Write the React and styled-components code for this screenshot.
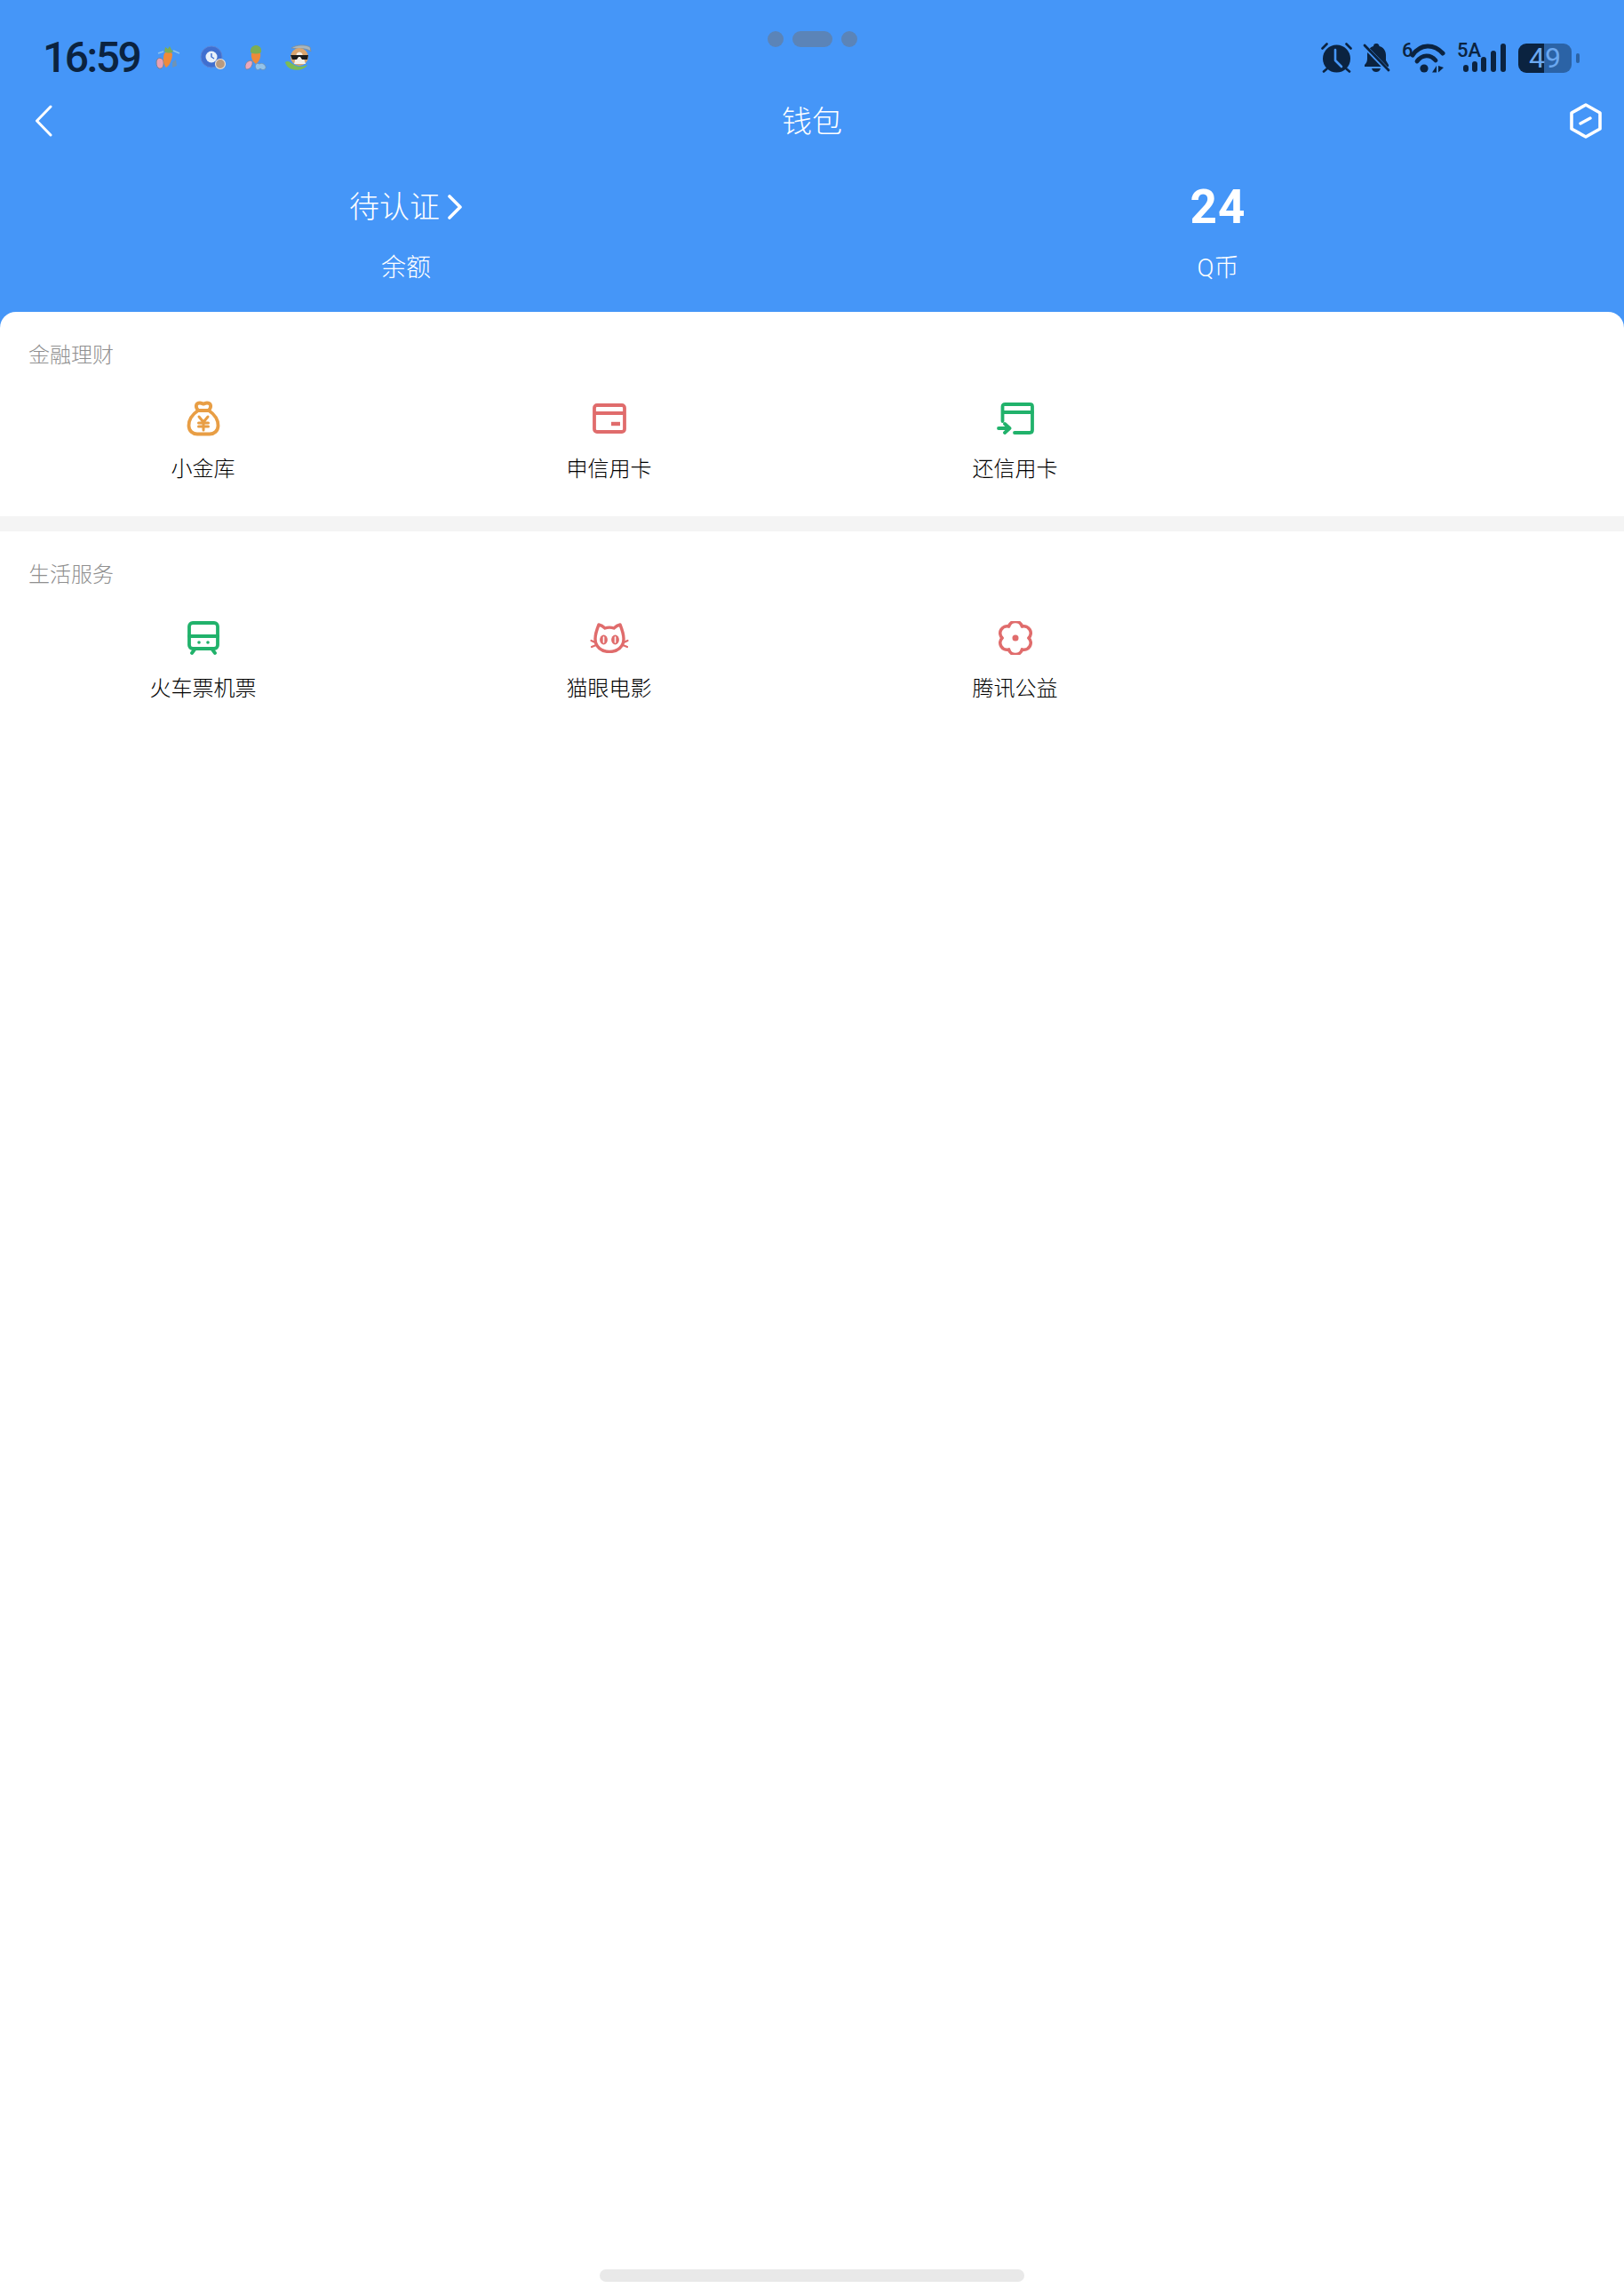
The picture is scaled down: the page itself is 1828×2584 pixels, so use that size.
import styled, { createGlobalStyle } from 'styled-components';

const dark = '#0b2340'
const blue = '#4596f8'
const cjk = `Roboto, "Noto Sans CJK SC", sans-serif`

const Global = createGlobalStyle`
html, body {
    margin: 0;
    padding: 0;
    background: #FFFFFF;
}
* {
    box-sizing: border-box;
}
`

const financeItems = [
    { name: '小金库', icon: <BagIcon /> },
    { name: '申信用卡', icon: <CardIcon /> },
    { name: '还信用卡', icon: <RepayIcon /> },
]

const lifeItems = [
    { name: '火车票机票', icon: <TrainIcon /> },
    { name: '猫眼电影', icon: <CatIcon /> },
    { name: '腾讯公益', icon: <FlowerIcon /> },
]

export default function App() {
    return (
        <Page>
            <Global />
            <Header>
                <Island>
                    <IslandDot />
                    <IslandPill />
                    <IslandDot />
                </Island>
                <StatusBar>
                    <StatusLeft>
                        <Time>16:59</Time>
                        <Notifications>
                            <CarrotCry />
                            <ClockBadge />
                            <CarrotHeart />
                            <DogGlasses />
                        </Notifications>
                    </StatusLeft>
                    <StatusRight>
                        <AlarmIcon />
                        <BellOffIcon />
                        <WifiIcon />
                        <SignalIcon />
                        <Battery>49</Battery>
                    </StatusRight>
                </StatusBar>
                <NavBar>
                    <BackButton>
                        <svg width="20" height="36" viewBox="0 0 20 36" fill="none">
                            <path d="M18 2 L2.5 18 L18 34" stroke="#fff" strokeWidth="3" strokeLinecap="round" strokeLinejoin="round" />
                        </svg>
                    </BackButton>
                    <Title>钱包</Title>
                    <HexButton>
                        <svg width="36" height="40" viewBox="0 0 36 40" fill="none">
                            <path d="M18 2 L34 11 V29 L18 38 L2 29 V11 Z" stroke="#fff" strokeWidth="3.6" strokeLinejoin="round" />
                            <path d="M12 23 L23 17" stroke="#fff" strokeWidth="3.4" strokeLinecap="round" />
                        </svg>
                    </HexButton>
                </NavBar>
                <Stats>
                    <Stat>
                        <Pending>
                            待认证
                            <svg width="18" height="28" viewBox="0 0 18 28" fill="none">
                                <path d="M3 2 L15 14 L3 26" stroke="#fff" strokeWidth="3.6" strokeLinecap="round" strokeLinejoin="round" />
                            </svg>
                        </Pending>
                        <StatLabel>余额</StatLabel>
                    </Stat>
                    <Stat>
                        <Coins>24</Coins>
                        <StatLabel>Q币</StatLabel>
                    </Stat>
                </Stats>
            </Header>
            <Sheet>
                <Section>
                    <SectionTitle>金融理财</SectionTitle>
                    <Grid>
                        {financeItems.map(item => (
                            <Item key={item.name}>
                                <IconBox>{item.icon}</IconBox>
                                <ItemName>{item.name}</ItemName>
                            </Item>
                        ))}
                    </Grid>
                </Section>
                <Divider />
                <Section>
                    <SectionTitle>生活服务</SectionTitle>
                    <Grid>
                        {lifeItems.map(item => (
                            <Item key={item.name}>
                                <IconBox>{item.icon}</IconBox>
                                <ItemName>{item.name}</ItemName>
                            </Item>
                        ))}
                    </Grid>
                </Section>
            </Sheet>
            <HomeBar />
        </Page>
    )
}

function BagIcon() {
    return (
        <svg width="38" height="40" viewBox="0 0 38 40" fill="none" stroke="#e89e45" strokeWidth="3.8" strokeLinecap="round" strokeLinejoin="round">
            <path d="M13 11 C7 15 2.5 21 2.5 28 C2.5 34 7 37.5 12 37.5 H26 C31 37.5 35.5 34 35.5 28 C35.5 21 31 15 25 11 Z" />
            <path d="M13 11 C9 6 11 2.5 15 2.5 C17 2.5 18 3.5 19 3.5 C20 3.5 21 2.5 23 2.5 C27 2.5 29 6 25 11" />
            <path d="M14 18 L19 24 L24 18 M13.5 25 H24.5 M13.5 29 H24.5 M19 24 V33" strokeWidth="3" />
        </svg>
    )
}

function CardIcon() {
    return (
        <svg width="38" height="34" viewBox="0 0 38 34" fill="none" stroke="#e06c6c" strokeWidth="3.8">
            <rect x="2" y="2" width="34" height="30" rx="3" />
            <path d="M2 11 H36" />
            <path d="M21 23 H31" strokeWidth="4.4" />
        </svg>
    )
}

function RepayIcon() {
    return (
        <svg width="42" height="36" viewBox="0 0 42 36" fill="none" stroke="#21b26b" strokeWidth="3.8" strokeLinecap="round" strokeLinejoin="round">
            <path d="M6.5 21 V4.5 C6.5 2.5 7.5 2 9.5 2 H37 C39 2 40 2.5 40 4.5 V31 C40 33 39 34 37 34 H20" />
            <path d="M7 11 H40" />
            <path d="M2 29 H14 M9 24 L14.5 29 L9 34" />
        </svg>
    )
}

function TrainIcon() {
    return (
        <svg width="36" height="38" viewBox="0 0 36 38" fill="none" stroke="#21b26b" strokeWidth="3.8" strokeLinecap="round" strokeLinejoin="round">
            <rect x="2" y="2" width="32" height="29" rx="4" />
            <path d="M2 17 H34" />
            <path d="M8 32 L5 36 M28 32 L31 36" />
            <circle cx="13" cy="24" r="1.8" fill="#21b26b" stroke="none" />
            <circle cx="23" cy="24" r="1.8" fill="#21b26b" stroke="none" />
        </svg>
    )
}

function CatIcon() {
    return (
        <svg width="44" height="34" viewBox="0 0 44 34" fill="none" stroke="#e06c6c" strokeWidth="3.4" strokeLinecap="round" strokeLinejoin="round">
            <path d="M10 2 C8 7 6 12 6 18 C6 27 13 32.5 22 32.5 C31 32.5 38 27 38 18 C38 12 36 7 34 2 C31 2.5 29 4 27 6 C24 5 20 5 17 6 C15 4 13 2.5 10 2 Z" />
            <ellipse cx="15.5" cy="19" rx="4.4" ry="5.4" fill="#e06c6c" stroke="none" />
            <ellipse cx="28.5" cy="19" rx="4.4" ry="5.4" fill="#e06c6c" stroke="none" />
            <path d="M15.5 16 V22 M28.5 16 V22" stroke="#fff" strokeWidth="1.6" />
            <path d="M1.5 20 L6 22 M2 27 L7 25 M42.5 20 L38 22 M42 27 L37 25" strokeWidth="2.2" />
        </svg>
    )
}

function FlowerIcon() {
    return (
        <svg width="38" height="38" viewBox="4 4 28 28" fill="none" stroke="#e06c6c" strokeWidth="2.7" strokeLinejoin="round">
            <path d="M12.5 8.47 A5.7 5.7 0 0 1 23.5 8.47 A5.7 5.7 0 0 1 29 18 A5.7 5.7 0 0 1 23.5 27.53 A5.7 5.7 0 0 1 12.5 27.53 A5.7 5.7 0 0 1 7 18 A5.7 5.7 0 0 1 12.5 8.47 Z" />
            <circle cx="18" cy="18" r="2.6" fill="#e06c6c" stroke="none" />
        </svg>
    )
}

function CarrotCry() {
    return (
        <svg width="32" height="30" viewBox="0 0 32 30">
            <path d="M2 20 C2 14 9 14 10 19 C11 25 8 28 5 27 C3 26 2 24 2 20 Z" fill="#e8a0b4" stroke="#77808c" strokeWidth="1" />
            <path d="M11 10 C14 8 19 8 20 11 C20 17 16 25 13 26 C10 23 9 15 11 10 Z" fill="#ee8a3a" />
            <path d="M11 8 L12 3 L15 5 L17 2 L19 6 L21 8 C18 10 14 10 11 8 Z" fill="#7cad55" />
            <path d="M4 10 L10 8 M21 7 L28 10" stroke="#8cc4ee" strokeWidth="1.6" fill="none" />
            <path d="M20 20 L24 17 L25 24 L20 26 Z" fill="#6f93b5" />
        </svg>
    )
}

function ClockBadge() {
    return (
        <svg width="30" height="28" viewBox="0 0 30 28">
            <circle cx="13" cy="13" r="12" fill="#3f6fd0" stroke="#5d86d6" strokeWidth="1" />
            <circle cx="13" cy="13" r="6.5" fill="#e9f1fb" />
            <path d="M13 9 V13 L16 15" stroke="#3f6fd0" strokeWidth="1.4" fill="none" />
            <circle cx="23" cy="21" r="5.5" fill="#b89a80" stroke="#e9e2da" strokeWidth="1.2" />
        </svg>
    )
}

function CarrotHeart() {
    return (
        <svg width="26" height="30" viewBox="0 0 26 30">
            <path d="M8 10 C11 8 16 8 18 10 C19 15 16 20 13 22 C10 20 7 15 8 10 Z" fill="#ee8a3a" />
            <path d="M7 9 C6 3 11 1 13 1 C16 1 20 3 19 9 C15 11 11 11 7 9 Z" fill="#7cad55" />
            <path d="M1 25 C1 20 6 17 9 19 C10 24 6 28 3 28 C2 28 1 27 1 25 Z" fill="#eba8bd" stroke="#77808c" strokeWidth=".8" />
            <path d="M13 27 C11 23 14 20 17 22 C20 20 25 23 24 27 C22 29 20 29 18 27 C16 29 14 29 13 27 Z" fill="#93c3ea" stroke="#6f8fae" strokeWidth=".8" />
        </svg>
    )
}

function DogGlasses() {
    return (
        <svg width="32" height="30" viewBox="0 0 32 30">
            <path d="M8 4 C14 0 24 0 29 3 L30 8 C28 6 22 4 16 5 Z" fill="#a9b6bd" stroke="#7f8d95" strokeWidth=".8" />
            <circle cx="17" cy="14" r="10" fill="#d9a56e" />
            <path d="M14 10 C16 8 18 8 20 10 L24 22 L11 22 Z" fill="#f4efe8" />
            <path d="M7 12 H27 L26 17 H20 L18 14 H16 L14 17 H9 Z" fill="#1c1c1c" />
            <path d="M1 20 C5 17 8 22 13 24 C18 26 24 24 26 23 C24 28 14 30 9 28 C5 27 2 24 1 20 Z" fill="#7dbb55" />
        </svg>
    )
}

function AlarmIcon() {
    return (
        <svg width="35" height="34" viewBox="0 0 35 34" fill="none" stroke={dark} strokeLinecap="round">
            <circle cx="17.5" cy="18" r="15.5" fill={dark} stroke="none" />
            <path d="M16 8 V20 L23 27" stroke={blue} strokeWidth="2.6" strokeLinejoin="round" />
            <path d="M1.5 6.5 L6.5 1.5 M28.5 1.5 L33.5 6.5 M3 32.5 L6.5 29.5 M32 32.5 L28.5 29.5" strokeWidth="2.6" />
        </svg>
    )
}

function BellOffIcon() {
    return (
        <svg width="31" height="34" viewBox="0 0 31 34">
            <path d="M15 1 C18 1 18.5 3 18.5 4 C23 5 26 9 26 14 V20 L29 25 V27 H2 V25 C4 23 5 21 5 18 V14 C5 9 8 5 12 4 C12 2 13 1 15 1 Z" fill={dark} />
            <path d="M10 29 H20 C19 32 17 33 15 33 C13 33 11 32 10 29 Z" fill={dark} />
            <path d="M1 3 L29 32" stroke={blue} strokeWidth="5" />
            <path d="M2 3 L29 31" stroke={dark} strokeWidth="2.8" strokeLinecap="round" />
        </svg>
    )
}

function WifiIcon() {
    return (
        <TallIcon width="50" height="40" viewBox="0 -6 50 40" fill="none" stroke={dark} strokeLinecap="round">
            <text x="1" y="16" fontFamily="Roboto, sans-serif" fontSize="22" fontWeight="500" fill={dark} stroke="none">6</text>
            <path d="M13 14 C22 1 37 1 47 12" strokeWidth="5" />
            <path d="M18 21 C24 13 33 13 39 20" strokeWidth="4.8" />
            <circle cx="26" cy="29" r="4.6" fill={dark} stroke="none" />
            <path d="M35 33.5 L40 26 V33.5 Z M42 26 V33.5 L48 28 Z" fill={dark} stroke="none" />
        </TallIcon>
    )
}

function SignalIcon() {
    return (
        <TallIcon width="56" height="40" viewBox="0 -6 56 40" fill={dark}>
            <text x="1" y="16" fontFamily="Roboto, sans-serif" fontSize="22" fontWeight="500">5A</text>
            <rect x="8" y="25" width="6" height="8" rx="3" />
            <rect x="18" y="21" width="6" height="12" rx="3" />
            <rect x="28" y="16" width="6" height="17" rx="3" />
            <rect x="39" y="9" width="6" height="24" rx="3" />
            <rect x="50" y="1" width="6" height="32" rx="3" />
        </TallIcon>
    )
}

const Page = styled.div`
width: 100%;
min-height: 2584px;
background: #FFFFFF;
display: flex;
flex-direction: column;
font-family: ${cjk};
`

const Header = styled.header`
position: relative;
height: 369px;
background: ${blue};
padding-top: 46px;
color: #FFFFFF;
`

const Island = styled.div`
position: absolute;
top: 35px;
left: 864px;
display: flex;
gap: 10px;
`

const IslandDot = styled.div`
width: 18px;
height: 18px;
border-radius: 50%;
background: #5b84b8;
`

const IslandPill = styled.div`
width: 45px;
height: 18px;
border-radius: 9px;
background: #5b84b8;
`

const StatusBar = styled.div`
height: 38px;
padding: 0 51px 0 48px;
display: flex;
align-items: center;
justify-content: space-between;
`

const StatusLeft = styled.div`
display: flex;
align-items: center;
`

const Time = styled.div`
width: 126px;
font-family: Roboto, sans-serif;
font-size: 48px;
font-weight: 500;
line-height: 48px;
letter-spacing: -2.5px;
color: ${dark};
`

const Notifications = styled.div`
width: 178px;
display: flex;
align-items: center;
justify-content: space-between;
`

const StatusRight = styled.div`
display: flex;
align-items: center;
gap: 12px;
`

const TallIcon = styled.svg`
margin-top: -6px;
`

const Battery = styled.div`
position: relative;
width: 60px;
height: 33px;
margin: 0 8px 0 2px;
border-radius: 9px;
background: linear-gradient(90deg, ${dark} 48%, #2b63a6 48%);
color: #6ba8f0;
font-family: Roboto, sans-serif;
font-size: 32px;
line-height: 33px;
text-align: center;

&::after {
    content: '';
    position: absolute;
    top: 11px;
    right: -9px;
    width: 4px;
    height: 11px;
    border-radius: 2px;
    background: #2b63a6;
}
`

const NavBar = styled.div`
height: 50px;
margin-top: 26px;
padding: 0 25px;
display: grid;
grid-template-columns: 1fr auto 1fr;
align-items: center;
`

const BackButton = styled.div`
margin-left: 14px;
display: flex;
`

const HexButton = styled.div`
justify-self: end;
display: flex;
`

const Title = styled.div`
padding-top: 2px;
font-size: 34px;
font-weight: 300;
line-height: 50px;
`

const Stats = styled.div`
margin-top: 50px;
display: grid;
grid-template-columns: 1fr 1fr;
`

const Stat = styled.div`
display: flex;
flex-direction: column;
align-items: center;
`

const Pending = styled.div`
height: 46px;
display: flex;
align-items: center;
gap: 8px;
font-size: 34px;
font-weight: 300;
line-height: 46px;
`

const Coins = styled.div`
height: 46px;
font-family: Roboto, sans-serif;
font-weight: 700;
font-size: 53px;
line-height: 46px;
letter-spacing: 1px;
`

const StatLabel = styled.div`
margin-top: 28px;
font-size: 28px;
font-weight: 300;
line-height: 36px;
`

const Sheet = styled.main`
margin-top: -18px;
position: relative;
background: #FFFFFF;
border-radius: 18px 18px 0 0;
`

const Section = styled.section`
padding: 31px 0 35px;
`

const SectionTitle = styled.h2`
margin: 0;
padding-left: 32px;
font-size: 24px;
font-weight: 300;
line-height: 36px;
color: #8f8f8f;
`

const Grid = styled.div`
margin-top: 31px;
display: grid;
grid-template-columns: repeat(4, 1fr);
`

const Item = styled.div`
display: flex;
flex-direction: column;
align-items: center;
`

const IconBox = styled.div`
height: 44px;
display: flex;
align-items: center;
justify-content: center;
`

const ItemName = styled.div`
margin-top: 17px;
font-size: 24px;
font-weight: 300;
line-height: 36px;
color: #000000;
`

const Divider = styled.div`
height: 17px;
background: #f4f4f4;
`

const HomeBar = styled.div`
width: 478px;
height: 14px;
margin: auto auto 16px;
border-radius: 7px;
background: #e9e9e9;
`
